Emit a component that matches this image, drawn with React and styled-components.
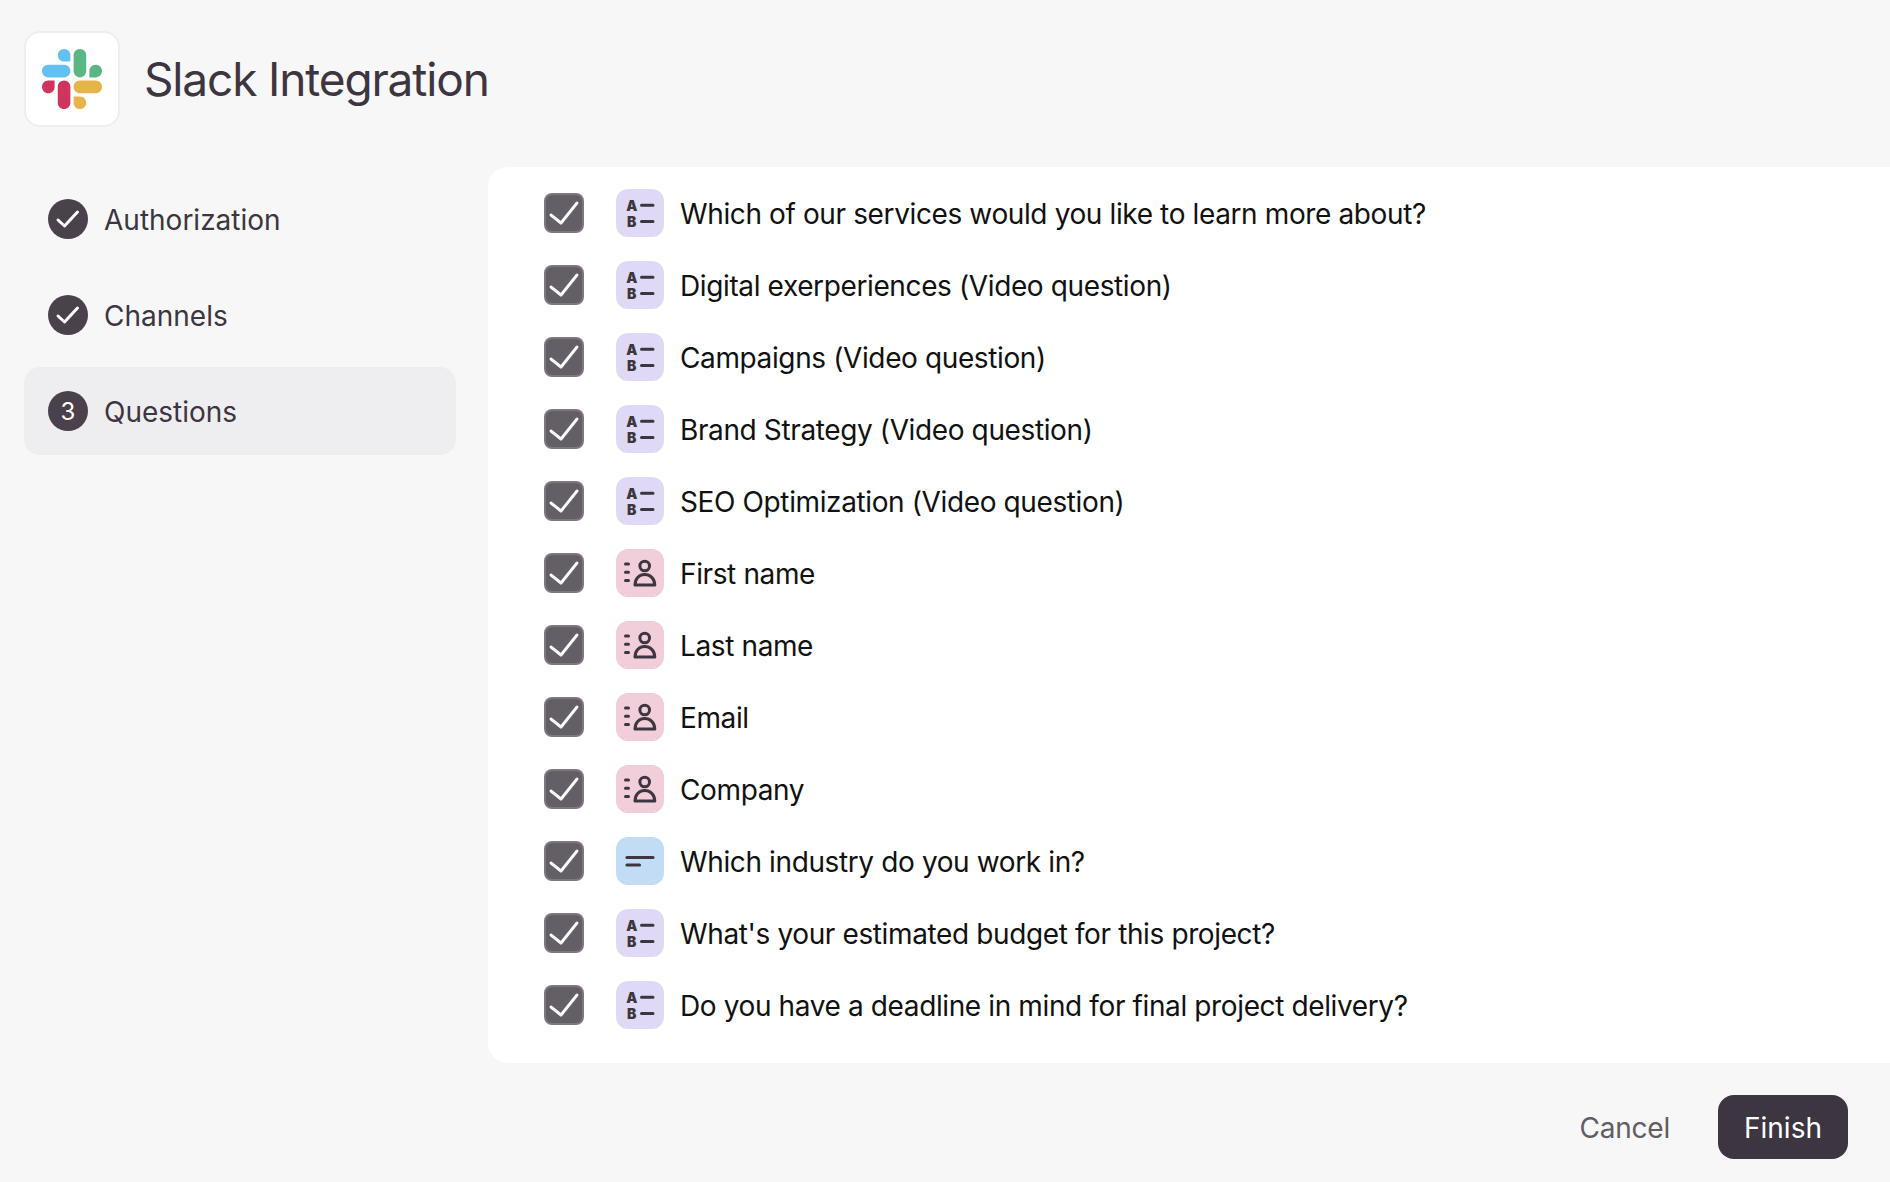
import React from "react";
import styled, { createGlobalStyle } from "styled-components";

const Global = createGlobalStyle`
  html, body { margin: 0; padding: 0; background: #f7f7f7; }
  body { font-family: Inter, "Noto Sans", sans-serif; }
`;

const Page = styled.div`
  width: 1890px;
  height: 1182px;
  overflow: hidden;
  display: flex;
  flex-direction: column;
  background: #f7f7f7;
`;

const Header = styled.header`
  display: flex;
  align-items: center;
  gap: 24px;
  padding: 31px 0 0 24px;
`;

const LogoCard = styled.div`
  box-sizing: border-box;
  width: 96px;
  height: 96px;
  border: 2px solid #eeeeee;
  border-radius: 16px;
  background: #fff;
  display: flex;
  align-items: center;
  justify-content: center;
`;

const Title = styled.h1`
  margin: 0;
  font-size: 46px;
  font-weight: 400;
  line-height: 56px;
  letter-spacing: -1.15px;
  color: #3d3540;
`;

const Main = styled.main`
  display: flex;
  margin-top: 40px;
`;

const Sidebar = styled.nav`
  box-sizing: border-box;
  flex: 0 0 488px;
  padding: 8px 32px 0 24px;
  display: flex;
  flex-direction: column;
  gap: 8px;
`;

const Step = styled.div`
  height: 88px;
  padding-left: 24px;
  border-radius: 16px;
  display: flex;
  align-items: center;
  gap: 16px;
  background: ${(p) => (p.$active ? "#eeeef0" : "transparent")};
  color: #3d3540;
  font-size: 28px;
  font-weight: 420;
`;

const StepLabel = styled.span`
  padding-top: 1px;
`;

const StepBadge = styled.span`
  width: 40px;
  height: 40px;
  border-radius: 50%;
  background: #4b414d;
  color: #fff;
  font-size: 24px;
  font-weight: 400;
  display: flex;
  align-items: center;
  justify-content: center;
`;

const Panel = styled.section`
  flex: 1;
  height: 896px;
  box-sizing: border-box;
  padding: 10px 0 22px 56px;
  background: #fff;
  border-radius: 20px 0 0 20px;
`;

const Row = styled.div`
  height: 72px;
  display: flex;
  align-items: center;
  color: #111;
  font-size: 28px;
  letter-spacing: -0.38px;
`;

const RowLabel = styled.span`
  padding-top: 2px;
`;

const Checkbox = styled.span`
  box-sizing: border-box;
  width: 40px;
  height: 40px;
  margin-right: 32px;
  border: 2px solid #7d7780;
  border-radius: 8px;
  background: #645e66;
  display: flex;
  align-items: center;
  justify-content: center;
`;

const TypeIcon = styled.span`
  width: 48px;
  height: 48px;
  margin-right: 16px;
  border-radius: 12px;
  background: ${(p) => p.$bg};
  display: block;
`;

const Footer = styled.footer`
  display: flex;
  justify-content: flex-end;
  align-items: center;
  gap: 48px;
  padding: 32px 42px 0 0;
`;

const CancelButton = styled.button`
  border: 0;
  padding: 2px 0 0;
  background: none;
  font: inherit;
  font-size: 28px;
  letter-spacing: -0.2px;
  color: #625c66;
`;

const FinishButton = styled.button`
  width: 130px;
  height: 64px;
  border: 0;
  padding: 2px 0 0;
  border-radius: 16px;
  background: #3d3540;
  color: #fff;
  font: inherit;
  font-size: 28px;
`;

const SlackLogo = () => (
  <svg width="60" height="60" viewBox="0 0 122.8 122.8">
    <path d="M25.8 77.6c0 7.1-5.8 12.9-12.9 12.9S0 84.7 0 77.6s5.8-12.9 12.9-12.9h12.9v12.9z" fill="#CE345D" />
    <path d="M32.3 77.6c0-7.1 5.8-12.9 12.9-12.9s12.9 5.8 12.9 12.9v32.3c0 7.1-5.8 12.9-12.9 12.9s-12.9-5.8-12.9-12.9V77.6z" fill="#CE345D" />
    <path d="M45.2 25.8c-7.1 0-12.9-5.8-12.9-12.9S38.1 0 45.2 0s12.9 5.8 12.9 12.9v12.9H45.2z" fill="#63C1F1" />
    <path d="M45.2 32.3c7.1 0 12.9 5.8 12.9 12.9s-5.8 12.9-12.9 12.9H12.9C5.8 58.1 0 52.3 0 45.2s5.8-12.9 12.9-12.9h32.3z" fill="#63C1F1" />
    <path d="M97 45.2c0-7.1 5.8-12.9 12.9-12.9s12.9 5.8 12.9 12.9-5.8 12.9-12.9 12.9H97V45.2z" fill="#5AB784" />
    <path d="M90.5 45.2c0 7.1-5.8 12.9-12.9 12.9s-12.9-5.8-12.9-12.9V12.9C64.7 5.8 70.5 0 77.6 0s12.9 5.8 12.9 12.9v32.3z" fill="#5AB784" />
    <path d="M77.6 97c7.1 0 12.9 5.8 12.9 12.9s-5.8 12.9-12.9 12.9-12.9-5.8-12.9-12.9V97h12.9z" fill="#E5B44B" />
    <path d="M77.6 90.5c-7.1 0-12.9-5.8-12.9-12.9s5.8-12.9 12.9-12.9h32.3c7.1 0 12.9 5.8 12.9 12.9s-5.8 12.9-12.9 12.9H77.6z" fill="#E5B44B" />
  </svg>
);

const BadgeCheck = () => (
  <svg width="40" height="40" viewBox="0 0 40 40" fill="none" stroke="#fff" strokeWidth="3" strokeLinecap="round" strokeLinejoin="round">
    <path d="M10 21 L16.5 27 L29.5 13" />
  </svg>
);

const BoxCheck = () => (
  <svg width="36" height="36" viewBox="2 2 36 36" fill="none" stroke="#fff" strokeWidth="2.9" strokeLinecap="round" strokeLinejoin="round">
    <path d="M7 22 L17 30 L33 10" />
  </svg>
);

const ink = "#3d3540";

const ChoiceGlyph = () => (
  <svg width="48" height="48" viewBox="0 0 48 48" fill="none" stroke={ink} strokeWidth="3" strokeLinecap="round">
    <path d="M25.5 16.2 H37 M25.5 32.4 H37" />
    <text textAnchor="middle" fontFamily="Inter, sans-serif" fontWeight="900" fontSize="14" fill={ink} stroke="none">
      <tspan x="15.5" y="21.5">A</tspan>
      <tspan x="15.5" y="38.4">B</tspan>
    </text>
  </svg>
);

const ContactGlyph = () => (
  <svg width="48" height="48" viewBox="0 0 48 48" fill="none" stroke={ink} strokeWidth="3" strokeLinecap="round" strokeLinejoin="round">
    <path d="M9.5 15 H12.5 M9.5 23.3 H12.5 M9.5 31.4 H12.5" />
    <circle cx="28.7" cy="17" r="4.8" />
    <path d="M19 36 C19 29.5 23.5 25.5 28.7 25.5 C34 25.5 38.8 29.5 38.8 36 Z" />
  </svg>
);

const ShortTextGlyph = () => (
  <svg width="48" height="48" viewBox="0 0 48 48" fill="none" stroke={ink} strokeWidth="3.2" strokeLinecap="round">
    <path d="M11 20.5 H37 M11 28 H23.5" />
  </svg>
);

const kinds = {
  choice: { bg: "#dfd9f6", Glyph: ChoiceGlyph },
  contact: { bg: "#f1ced9", Glyph: ContactGlyph },
  short: { bg: "#c2dcf5", Glyph: ShortTextGlyph },
};

const questions = [
  ["choice", "Which of our services would you like to learn more about?"],
  ["choice", "Digital exerperiences (Video question)"],
  ["choice", "Campaigns (Video question)"],
  ["choice", "Brand Strategy (Video question)"],
  ["choice", "SEO Optimization (Video question)"],
  ["contact", "First name"],
  ["contact", "Last name"],
  ["contact", "Email"],
  ["contact", "Company"],
  ["short", "Which industry do you work in?"],
  ["choice", "What's your estimated budget for this project?"],
  ["choice", "Do you have a deadline in mind for final project delivery?"],
];

export default function App() {
  return (
    <Page>
      <Global />
      <Header>
        <LogoCard>
          <SlackLogo />
        </LogoCard>
        <Title>Slack Integration</Title>
      </Header>
      <Main>
        <Sidebar>
          <Step>
            <StepBadge><BadgeCheck /></StepBadge>
            <StepLabel>Authorization</StepLabel>
          </Step>
          <Step>
            <StepBadge><BadgeCheck /></StepBadge>
            <StepLabel>Channels</StepLabel>
          </Step>
          <Step $active>
            <StepBadge>3</StepBadge>
            <StepLabel>Questions</StepLabel>
          </Step>
        </Sidebar>
        <Panel>
          {questions.map(([kind, label]) => {
            const { bg, Glyph } = kinds[kind];
            return (
              <Row key={label}>
                <Checkbox><BoxCheck /></Checkbox>
                <TypeIcon $bg={bg}><Glyph /></TypeIcon>
                <RowLabel>{label}</RowLabel>
              </Row>
            );
          })}
        </Panel>
      </Main>
      <Footer>
        <CancelButton>Cancel</CancelButton>
        <FinishButton>Finish</FinishButton>
      </Footer>
    </Page>
  );
}
